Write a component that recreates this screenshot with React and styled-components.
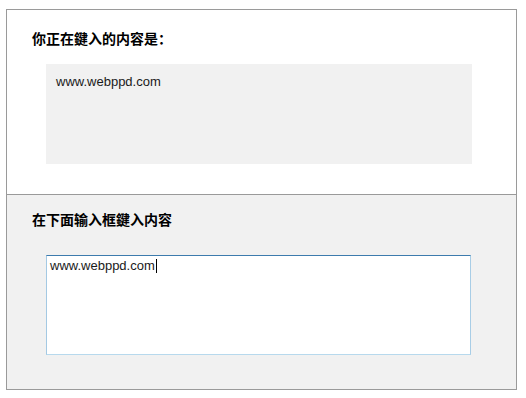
import React from "react";
import styled, { createGlobalStyle } from "styled-components";

const Global = createGlobalStyle`
  html, body { margin: 0; padding: 0; background: #ffffff; }
  body { font-family: "Liberation Sans", Arial, sans-serif; }
  * { box-sizing: border-box; }
`;

const Frame = styled.div`
  margin: 9px 0 0 6px;
  width: 511px;
  border: 1px solid #9a9a9a;
  display: flex;
  flex-direction: column;
`;

const Section = styled.section`
  height: ${(p) => p.$h}px;
  padding: ${(p) => p.$pt}px 0 0 25px;
  background: ${(p) => p.$bg};
  border-top: ${(p) => (p.$divider ? "1px solid #9a9a9a" : "none")};
  display: flex;
  flex-direction: column;
  align-items: flex-start;
`;

const Heading = styled.h2`
  margin: 0;
  font-family: "Noto Sans CJK SC", "Noto Sans CJK TC", sans-serif;
  font-weight: 700;
  font-size: 14px;
  line-height: 14px;
  color: #000;
`;

const Preview = styled.div`
  margin: 19px 0 0 14px;
  width: 426px;
  height: 100px;
  padding: 10px 10px;
  background: #f1f1f1;
  font-family: "Liberation Sans", Arial, sans-serif;
  font-size: 13px;
  line-height: 15px;
  color: #1a1a1a;
`;

const Input = styled.div`
  margin: 29px 0 0 14px;
  width: 425px;
  height: 100px;
  padding: 2px 3px;
  background: #ffffff;
  border-style: solid;
  border-width: 1px;
  border-color: #3d7bad #a8cde6 #b7d9ed #a4c9e3;
  font-family: "Liberation Sans", Arial, sans-serif;
  font-size: 13px;
  line-height: 15px;
  color: #1a1a1a;
`;

const Caret = styled.span`
  display: inline-block;
  width: 1px;
  height: 14px;
  margin-left: 1px;
  background: #000;
  vertical-align: -3px;
`;

export default function App() {
  const value = "www.webppd.com";
  return (
    <>
      <Global />
      <Frame>
        <Section $h={184} $pt={21} $bg="#ffffff">
          <Heading>你正在鍵入的内容是：</Heading>
          <Preview>{value}</Preview>
        </Section>
        <Section $h={195} $pt={17} $bg="#f1f1f1" $divider>
          <Heading>在下面输入框鍵入内容</Heading>
          <Input>
            {value}
            <Caret />
          </Input>
        </Section>
      </Frame>
    </>
  );
}
